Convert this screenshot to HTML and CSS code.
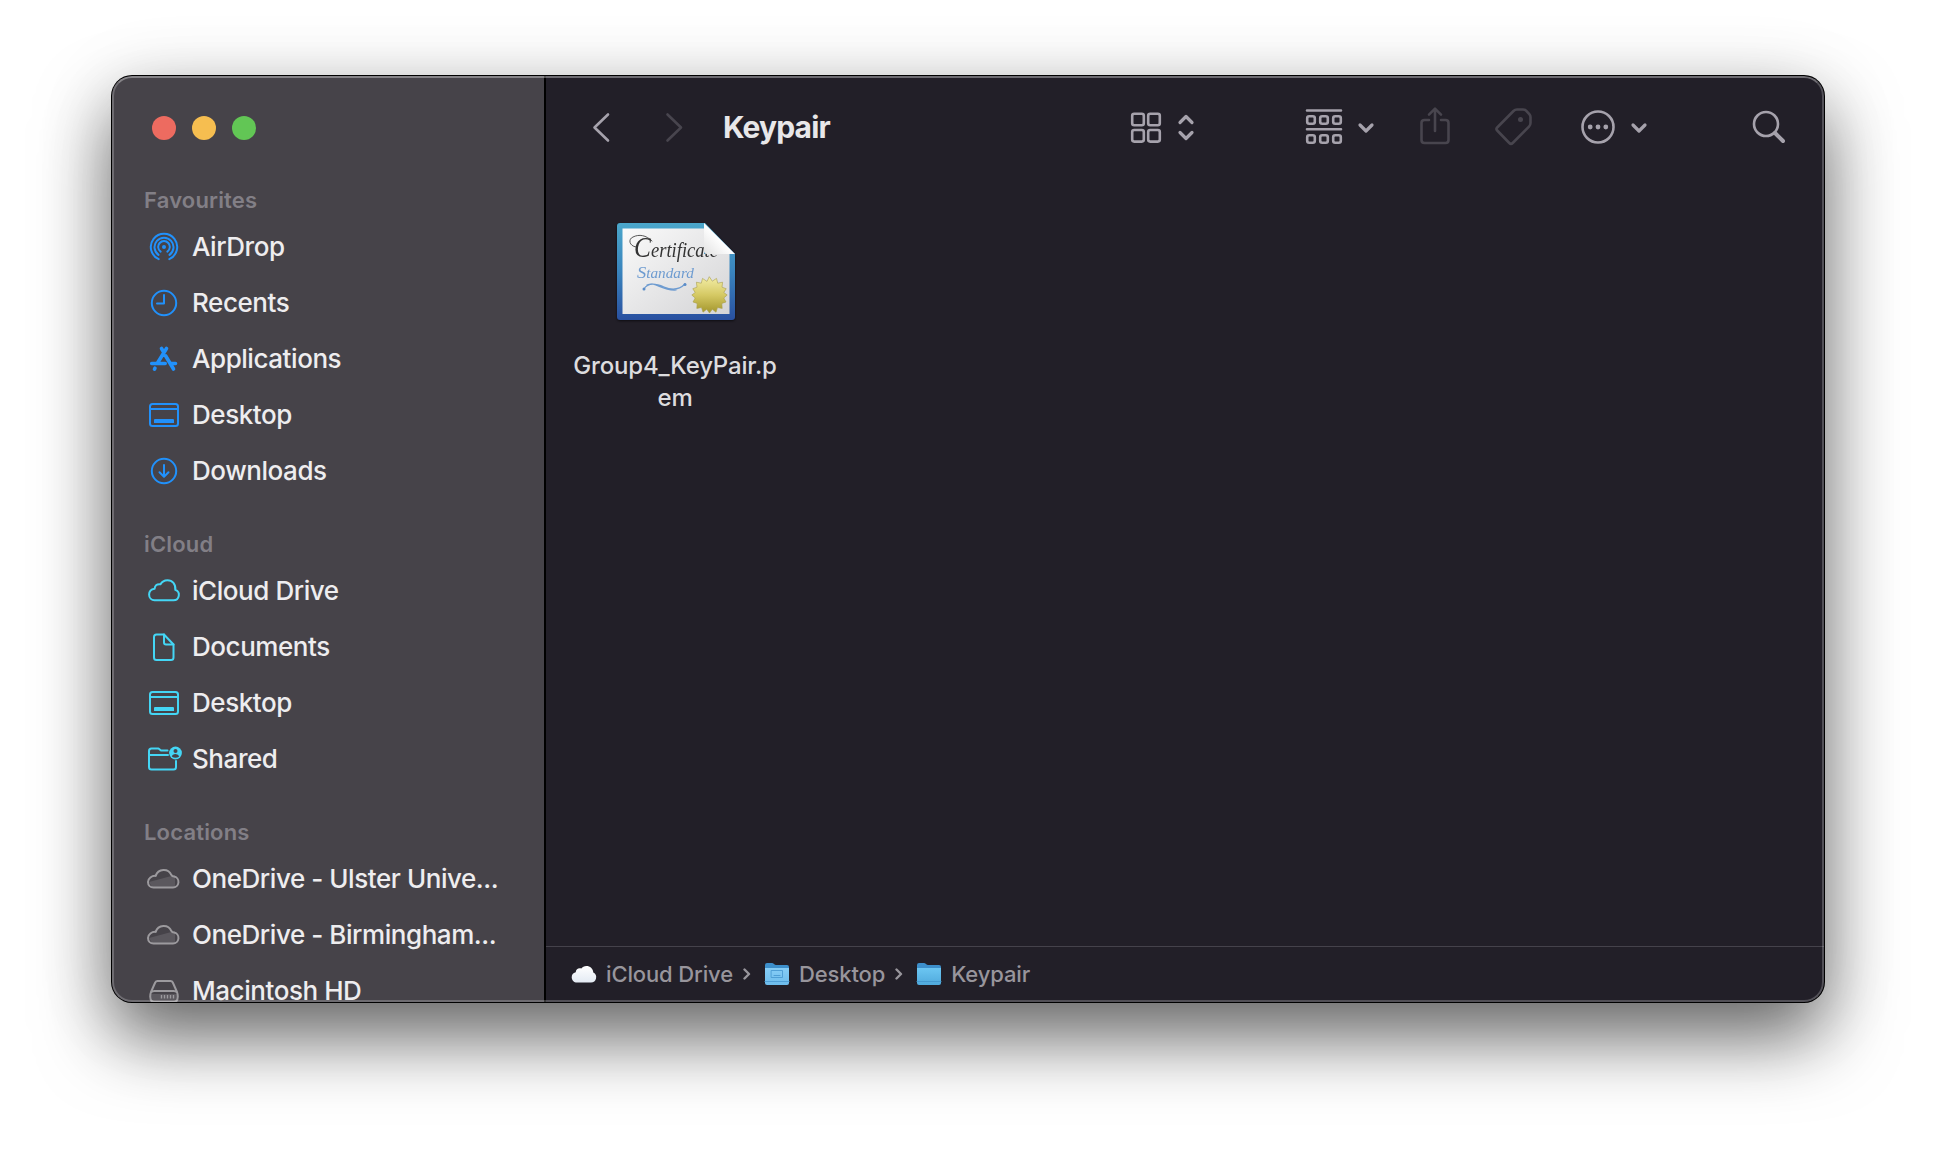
FILE: index.html
```html
<!DOCTYPE html>
<html lang="en-GB">
<head>
<meta charset="utf-8">
<title>Keypair</title>
<link rel="stylesheet" href="styles.css">
</head>
<body>
<svg class="defs" aria-hidden="true">
  <defs>
    <symbol id="desktop" viewBox="0 0 32 32"><rect x="2" y="5" width="28" height="22" rx="2.5"/><path d="M2 10h28"/><path class="solid" d="M8 20h17q1 0 1 1v3h-20v-3q0-1 1-1z"/></symbol>
    <symbol id="onedrive" viewBox="0 2 34 32"><path class="shade" d="M3 21L29 14V26H6Z"/><path d="M7.500 26.500h19.500a5.500 5.500 0 0 0 1-10.900c-1.500-.1-2-.5-2.600-1.500a8.400 8.400 0 0 0-15.700 .8c-3.900-.3-7.700 2.500-7.700 6.100s2.500 5.500 5.500 5.500z"/></symbol>
    <symbol id="chevron" viewBox="0 0 18 12"><path d="M3 3l6 6 6-6"/></symbol>
    <symbol id="crumb" viewBox="0 0 8 14"><path d="M1.500 2.500l4.500 4.500-4.500 4.500"/></symbol>
    <linearGradient id="blue" x1="0" y1="0" x2="0" y2="1"><stop offset="0" stop-color="#4ba7cb"/><stop offset=".5" stop-color="#3a84bd"/><stop offset="1" stop-color="#2950a0"/></linearGradient>
    <linearGradient id="paper" x1="0" y1="0" x2="1" y2="1"><stop offset="0" stop-color="#fafafa"/><stop offset="1" stop-color="#d4d4d6"/></linearGradient>
    <linearGradient id="fold" x1="0" y1="1" x2="1" y2="0"><stop offset="0" stop-color="#e2e2e2"/><stop offset=".5" stop-color="#fff"/></linearGradient>
    <linearGradient id="gold" x1="0" y1="0" x2="0" y2="1"><stop offset="0" stop-color="#f3eda6"/><stop offset=".5" stop-color="#d5c964"/><stop offset="1" stop-color="#a3962c"/></linearGradient>
    <linearGradient id="folder" x1="0" y1="0" x2="0" y2="1"><stop offset="0" stop-color="#6cc6f2"/><stop offset="1" stop-color="#4fa9dc"/></linearGradient>
    <linearGradient id="folderLight" x1="0" y1="0" x2="0" y2="1"><stop offset="0" stop-color="#86cdf6"/><stop offset="1" stop-color="#6dbcec"/></linearGradient>
    <linearGradient id="white" x1="0" y1="0" x2="0" y2="1"><stop offset="0" stop-color="#fff"/><stop offset="1" stop-color="#e3eaf3"/></linearGradient>
  </defs>
</svg>
<div class="window">
  <aside class="sidebar">
    <div class="lights"><i class="close"></i><i class="minimise"></i><i class="zoom"></i></div>
    <h2>Favourites</h2>
    <ul class="blue">
      <li><svg class="icon" viewBox="0 0 32 32"><path d="M10.700 28.100a13.200 13.200 0 1 1 10.600 0M10.500 23.900a9.500 9.500 0 1 1 11 0M12.600 20.600a5.800 5.800 0 1 1 6.800 0"/><circle class="solid" cx="16" cy="16" r="2"/></svg><span>AirDrop</span></li>
      <li><svg class="icon" viewBox="0 0 32 32"><circle cx="16" cy="16" r="12.200"/><path d="M16 8v8.500H9"/></svg><span>Recents</span></li>
      <li><svg class="icon" viewBox="0 0 32 32"><g class="thick"><path d="M13.500 5.500l1.800 3M18.500 5.500L9.500 20M3.700 20.500h13.500M23.500 20.500h4M17.700 13L25.500 26M7 25.200l-.5 .9"/></g></svg><span>Applications</span></li>
      <li><svg class="icon"><use href="#desktop"/></svg><span>Desktop</span></li>
      <li><svg class="icon" viewBox="0 0 32 32"><circle cx="16" cy="16" r="12.200"/><path d="M16 10v11.500M11.500 17.300l4.500 4.500 4.500-4.500"/></svg><span>Downloads</span></li>
    </ul>
    <h2>iCloud</h2>
    <ul class="cyan">
      <li><svg class="icon" viewBox="0 1 32 32"><path d="M6.500 26.200h19a5.300 5.300 0 0 0 1.800-10.300c.6-5.700-2.900-9.700-7.800-9.700-3.400 0-5.600 1.500-7 4.100-3.400-.7-5.700 1.300-5.900 4.500-3.300.5-5.500 2.800-5.500 5.700 0 3.400 2.400 5.700 5.400 5.700z"/></svg><span>iCloud Drive</span></li>
      <li><svg class="icon" viewBox="0 0 32 32"><path d="M8.500 3.500h7.500l9.500 10v13q0 2.500-2.500 2.500H8.500Q6 29 6 26.500V6q0-2.500 2.500-2.500z"/><path d="M16 3.500v8q0 2 2 2h7.500"/></svg><span>Documents</span></li>
      <li><svg class="icon"><use href="#desktop"/></svg><span>Desktop</span></li>
      <li><svg class="icon" viewBox="0 1 32 32"><path d="M19.500 8.500h-6.500l-2.500-2H3.500Q1 6.500 1 9v16q0 2.500 2.500 2.500h22q2.500 0 2.500-2.500v-6M1 13h19"/><circle class="solid" cx="27.500" cy="11" r="6.400"/><circle class="hole" cx="27.500" cy="9" r="2"/><path class="hole" d="M23.800 14.500q.6-2.500 3.700-2.500t3.700 2.500q-1.700 1.300-3.700 1.300t-3.700-1.300z"/></svg><span>Shared</span></li>
    </ul>
    <h2>Locations</h2>
    <ul class="grey">
      <li><svg class="icon wide"><use href="#onedrive"/></svg><span>OneDrive - Ulster Unive...</span></li>
      <li><svg class="icon wide"><use href="#onedrive"/></svg><span>OneDrive - Birmingham...</span></li>
      <li><svg class="icon" viewBox="0 0 32 32"><path class="shade" d="M2 19h28v9H2z"/><path d="M9.500 6h13q1.600 0 2.300 1.500l4.200 9.500q.8 2 .8 4.500c0 3.600-1.600 5.500-4.500 5.500H6.800c-3 0-4.600-1.900-4.600-5.500q0-2.500.8-4.500L7.200 7.500Q8 6 9.500 6zM3 17.500q1-1.500 3.500-1.500h19q2.500 0 3.500 1.500"/><path class="vents" d="M13.500 20v3.500M16.500 20v3.500M19.500 20v3.500M22.500 20v3.500M25.500 20v3.500"/></svg><span>Macintosh HD</span></li>
    </ul>
  </aside>
  <main>
    <header>
      <svg class="back" viewBox="0 0 20 32" width="20" height="32"><path d="M17 3.500L3.500 16.500 17 29.500"/></svg>
      <svg class="forward dim" viewBox="0 0 20 32" width="20" height="32"><path d="M3.500 3.500L17 16.500 3.500 29.500"/></svg>
      <h1>Keypair</h1>
      <svg class="grid" viewBox="0 0 32 32" width="32" height="32"><rect x="2.200" y="2.700" width="11.600" height="11.600" rx="2"/><rect x="18.200" y="2.700" width="11.600" height="11.600" rx="2"/><rect x="2.200" y="19" width="11.600" height="11.600" rx="2"/><rect x="18.200" y="19" width="11.600" height="11.600" rx="2"/></svg>
      <svg class="sort" viewBox="0 0 18 28" width="18" height="28"><path d="M3 9.500l6-6 6 6M3 19.500l6 6 6-6"/></svg>
      <svg class="group" viewBox="0 0 38 36" width="38" height="36"><path d="M2 1.500h34M2 20.300h34"/><rect x="2.200" y="7.200" width="7.600" height="7.600" rx="2"/><rect x="15.200" y="7.200" width="7.600" height="7.600" rx="2"/><rect x="28.200" y="7.200" width="7.600" height="7.600" rx="2"/><rect x="2.200" y="26.200" width="7.600" height="7.600" rx="2"/><rect x="15.200" y="26.200" width="7.600" height="7.600" rx="2"/><rect x="28.200" y="26.200" width="7.600" height="7.600" rx="2"/></svg>
      <svg class="down" width="18" height="12"><use href="#chevron"/></svg>
      <svg class="share dim" viewBox="0 1 32 40" width="32" height="40"><path d="M10 14H5.500Q2.500 14 2.500 17v17q0 3 3 3h21q3 0 3-3V17q0-3-3-3H22M16 25V3M10 8.700L16 2.700l6 6"/></svg>
      <svg class="tag dim" viewBox="0 0 40 40" width="40" height="40"><path d="M3.200 20.500L19.500 4q1.500-1.500 3.500-1.500h6q2 0 3.300 1.300l3 3.300q1.200 1.300 1.200 3v6q0 2-1.500 3.500L18.700 36q-1.700 1.700-3.400 0L3.200 23.500q-1.500-1.500 0-3z"/><circle class="solid" cx="26.500" cy="12.500" r="2.500"/></svg>
      <svg class="more" viewBox="0 0 36 36" width="36" height="36"><circle cx="18" cy="18" r="15.500"/><circle class="solid" cx="10.200" cy="18" r="2.400"/><circle class="solid" cx="18" cy="18" r="2.400"/><circle class="solid" cx="25.800" cy="18" r="2.400"/></svg>
      <svg class="down" width="18" height="12"><use href="#chevron"/></svg>
      <svg class="search" viewBox="0 0 34 34" width="34" height="34"><circle cx="14" cy="14" r="12"/><path class="handle" d="M23 23l8 8"/></svg>
    </header>
    <section class="files">
      <figure>
        <svg class="cert" viewBox="0 0 120 100" width="120" height="100">
          <path d="M3 0H88L118 31V94q0 3-3 3H3q-3 0-3-3V3q0-3 3-3z" fill="url(#blue)"/>
          <path d="M5.500 5.500H87V31h25.500v60H5.500z" fill="url(#paper)"/>
          <g class="script"><text x="17" y="34" font-size="22" textLength="84" lengthAdjust="spacingAndGlyphs" fill="#333"><tspan font-size="30">C</tspan>ertificate</text><text x="20" y="55" font-size="14" textLength="57" lengthAdjust="spacingAndGlyphs" fill="#6d9bd0"><tspan font-size="17">S</tspan>tandard</text></g>
          <path d="M19 24c-7-1-8-8-3-10 6-3 13-2 19 4" fill="none" stroke="#444" stroke-width=".9"/>
          <path d="M27 66c4-7 13-5 20-2s14 4 21-3M30 62c9-4 14 6 29 5" fill="none" stroke="#6d9bd0" stroke-width="1.200"/>
          <circle cx="27" cy="66" r="1.500" fill="#5a8cc8"/><circle cx="68" cy="61.500" r="1.500" fill="#5a8cc8"/>
          <path d="M87 0L118 31H90q-3 0-3-3z" fill="url(#fold)"/>
          <polygon fill="url(#gold)" stroke="#a9a04a" stroke-width=".6" points="92.500,54 95.300,58.200 99.500,55.400 100.700,60.200 105.600,59.200 105,64.200 109.200,65.700 106.800,69.500 110.200,72 106.800,75 109,79 104.800,80.400 105.200,85.400 100.500,84.500 99,89.200 95.300,86.200 92.500,90 89.700,86.200 86,89.200 84.500,84.500 79.800,85.400 80.200,80.400 76,79 78.200,75 74.800,72 78.200,69.500 75.800,65.700 80,64.200 79.400,59.200 84.300,60.200 85.500,55.400 89.700,58.200"/>
        </svg>
        <figcaption><span>Group4_KeyPair.p</span><span>em</span></figcaption>
      </figure>
    </section>
    <footer>
      <svg class="cloud" viewBox="0 0 26 18" width="26" height="18"><path fill="url(#white)" d="M6 17.500h14a5.300 5.300 0 0 0 2.300-10C22 3.500 19 1 15.500 1c-2.500 0-4 .9-5.200 2.500C7.500 2.700 5 4 4.700 7.200 2 8 .7 9.700 .7 12.200c0 3 2.300 5.300 5.300 5.300z"/></svg>
      <span>iCloud Drive</span>
      <svg class="sep" width="8" height="14"><use href="#crumb"/></svg>
      <svg class="folder" viewBox="0 0 26 24" width="26" height="24"><path fill="#3d8fcb" d="M1 3q0-2 2-2h5q1 0 2 1t2 1h11q2 0 2 2v4H1z"/><path fill="url(#folderLight)" d="M1 6h24v15q0 2-2 2H3q-2 0-2-2z"/><path fill="none" stroke="#4f9fd6" d="M7.500 8.500h11v7h-11zM10 13.500h6M1 19.500h24"/></svg>
      <span>Desktop</span>
      <svg class="sep" width="8" height="14"><use href="#crumb"/></svg>
      <svg class="folder" viewBox="0 0 26 24" width="26" height="24"><path fill="#3d8fcb" d="M1 3q0-2 2-2h5q1 0 2 1t2 1h11q2 0 2 2v4H1z"/><path fill="url(#folder)" d="M1 6h24v15q0 2-2 2H3q-2 0-2-2z"/><path fill="none" stroke="#4499cf" d="M1 19.500h24"/></svg>
      <span>Keypair</span>
    </footer>
  </main>
</div>
</body>
</html>
```
FILE: styles.css
```css
* { box-sizing: border-box; }
body {
  margin: 0;
  height: 1150px;
  padding: 76px 112px 148px;
  background: #fff;
  overflow: hidden;
  font-family: Inter, "Liberation Sans", sans-serif;
}
h1, h2, ul, figure { margin: 0; padding: 0; }
svg { flex: none; display: block; overflow: visible; fill: none; stroke: currentColor; stroke-width: 2; stroke-linecap: round; stroke-linejoin: round; }
.defs { position: absolute; width: 0; height: 0; }
.solid { fill: currentColor; stroke: none; }
span { white-space: nowrap; }

.window {
  position: relative;
  display: flex;
  width: 1712px;
  height: 926px;
  border-radius: 20px;
  overflow: hidden;
  background: #221f28;
  box-shadow: 0 0 0 1px #000, 0 36px 72px rgba(0, 0, 0, .56), 0 10px 80px rgba(0, 0, 0, .12);
}
.window::after {
  content: "";
  position: absolute;
  inset: 0;
  border: 2px solid rgba(255, 255, 255, .22);
  border-top-color: rgba(255, 255, 255, .34);
  border-radius: 20px;
  pointer-events: none;
}

.sidebar { width: 434px; flex: none; background: #464349; border-right: 2px solid #000; overflow: hidden; }
.lights { display: flex; gap: 16px; height: 79px; padding: 40px 0 0 40px; }
.lights i { width: 24px; height: 24px; border-radius: 50%; }
.close { background: #ed6b60; }
.minimise { background: #f6be50; }
.zoom { background: #62c655; }
h2 { height: 64px; padding: 31px 0 0 32px; font-size: 22px; line-height: 28px; font-weight: 600; letter-spacing: .18px; color: #827f86; }
ul { list-style: none; }
li { display: flex; align-items: center; height: 56px; padding: 0 0 2px 36px; font-size: 26px; font-weight: 450; letter-spacing: -.44px; }
li span { color: #eeedef; margin-left: 12px; }
.icon { width: 32px; height: 32px; margin-top: 2px; }
.icon.wide { width: 34px; margin-left: -2px; }
.blue { color: #2191fb; }
.cyan { color: #44d6f5; }
.grey { color: #9c9a9e; }
.thick { stroke-width: 3.6; }
.vents { stroke-width: 1.4; stroke-linecap: butt; }
.hole { fill: #464349; stroke: none; }
.shade { fill: #5b585e; stroke: none; }

main { flex: 1; display: flex; flex-direction: column; min-width: 0; }
header { display: flex; align-items: center; height: 102px; padding-left: 45px; color: #a6a2ac; }
header svg { stroke-width: 2.6; }
.dim { color: #48454e; }
.forward { margin-left: 53px; }
h1 { width: 407px; margin-left: 39px; font-size: 30px; line-height: 36px; font-weight: 700; letter-spacing: -.85px; color: #e8e7e9; }
header .sort, header .down { stroke-width: 3.2; }
.sort { margin-left: 15px; }
.group { margin-left: 110px; }
.down { margin: 1px 1px 0 14px; }
.share { margin-left: 43px; }
.tag { margin-left: 43px; }
.more { margin-left: 46px; }
.search { margin-left: 103px; }
header .handle { stroke-width: 4; }

.files { flex: 1; padding: 45px 0 0 26px; }
figure { width: 206px; display: flex; flex-direction: column; align-items: center; }
.cert { stroke: none; margin-left: 4px; filter: drop-shadow(0 1px 1px rgba(0, 0, 0, .6)); }
.script { font-family: "Liberation Serif", serif; font-style: italic; }
figcaption { display: flex; flex-direction: column; align-items: center; margin-top: 27px; font-size: 24px; line-height: 32px; font-weight: 450; letter-spacing: -.17px; color: #dddcdf; }

footer { display: flex; align-items: center; height: 56px; padding: 0 0 2px 25px; border-top: 1px solid #45424b; font-size: 22px; font-weight: 450; letter-spacing: -.13px; color: #98959c; }
footer span { margin-left: 9px; }
.cloud, .folder { stroke: none; stroke-width: 1; }
.sep { margin: 0 13px 0 10px; stroke-width: 2.4; }
```
